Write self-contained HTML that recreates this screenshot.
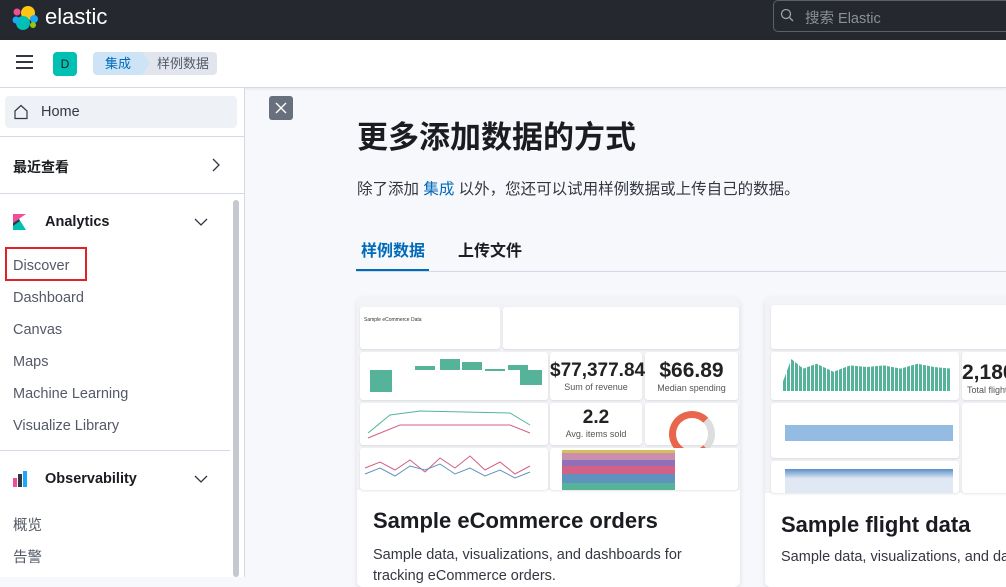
<!DOCTYPE html>
<html><head><meta charset="utf-8"><style>
*{box-sizing:border-box;margin:0;padding:0}
body{width:1006px;height:577px;overflow:hidden;background:#f7f8fc;font-family:"Liberation Sans","Noto Sans CJK SC",sans-serif;position:relative;color:#1a1c21}
.abs{position:absolute}
.top{left:0;top:0;width:1006px;height:40px;background:#25282f}
.bar2{left:0;top:40px;width:1006px;height:48px;background:#fff;border-bottom:1px solid #d3dae6;box-shadow:0 1px 3px rgba(0,0,0,.08)}
.side{left:0;top:88px;width:245px;height:489px;background:#fff;border-right:1px solid #d3dae6}
.nav{font-size:14.5px;color:#535966;left:13px}
.hr{left:0;width:245px;height:1px;background:#d3dae6}
.card{background:#fff;border-radius:6px;box-shadow:0 2px 6px rgba(0,0,0,.1);overflow:hidden}
.pn{position:absolute;background:#fff;border-radius:3px;box-shadow:0 1px 2px rgba(0,0,0,.1)}
.g{position:absolute;background:#54b399}
</style></head><body>
<div class="abs top">
 <svg class="abs" style="left:12px;top:4px" width="27" height="27" viewBox="0 0 27 27">
  <circle cx="16" cy="9" r="7" fill="#fec514"/><circle cx="11" cy="19" r="7" fill="#00bfb3"/>
  <circle cx="5" cy="8" r="3.5" fill="#f04e98"/><circle cx="22" cy="15" r="4" fill="#1ba9f5"/><circle cx="4" cy="16" r="3.5" fill="#1ba9f5"/><circle cx="21" cy="21" r="3" fill="#93c90e"/>
 </svg>
 <div class="abs" style="left:45px;top:4px;color:#fff;font-size:22px">elastic</div>
 <div class="abs" style="left:773px;top:0;width:240px;height:32px;border:1px solid #5a5f6b;border-radius:5px;background:#25282f"></div>
 <svg class="abs" style="left:780px;top:8px" width="14" height="14" viewBox="0 0 14 14"><circle cx="6" cy="6" r="4.5" fill="none" stroke="#98a2b3" stroke-width="1.3"/><path d="M9.5 9.5L13 13" stroke="#98a2b3" stroke-width="1.3"/></svg>
 <div class="abs" style="left:805px;top:7px;color:#8a8f99;font-size:14.5px">搜索 Elastic</div>
</div>
<div class="abs bar2">
 <div class="abs" style="left:16px;top:15px;width:17px;height:2px;background:#343741;box-shadow:0 6px 0 #343741,0 12px 0 #343741"></div>
 <div class="abs" style="left:53px;top:12px;width:24px;height:24px;background:#00bfb3;border-radius:4px;color:#1a1c21;font-size:12px;text-align:center;line-height:24px">D</div>
 <div class="abs" style="left:93px;top:12px;width:56px;height:23px;background:#cce4f5;border-radius:4px 0 0 4px;color:#006bb8;font-size:13px;line-height:23px;padding-left:12px">集成</div>
 <div class="abs" style="left:142px;top:12px;width:75px;height:23px;background:#e0e5ee;border-radius:0 4px 4px 0;color:#535966;font-size:13px;line-height:23px;padding-left:15px;clip-path:polygon(0 0,100% 0,100% 100%,0 100%,8px 50%)">样例数据</div>
 <div class="abs" style="left:142px;top:12px;width:8px;height:23px;background:#cce4f5;clip-path:polygon(0 0,0 100%,8px 50%)"></div>
</div>
<div class="abs side">
 <div class="abs" style="left:5px;top:8px;width:232px;height:32px;background:#eef1f6;border-radius:4px"></div>
 <svg class="abs" style="left:13px;top:16px" width="16" height="16" viewBox="0 0 16 16"><path d="M2 7L8 1.5 14 7V14.5H2Z" fill="none" stroke="#343741" stroke-width="1.2"/></svg>
 <div class="abs" style="left:41px;top:16px;font-size:14.5px;color:#343741">Home</div>
 <div class="abs hr" style="top:48px"></div>
 <div class="abs" style="left:13px;top:69px;font-size:14px;font-weight:bold">最近查看</div>
 <svg class="abs" style="left:211px;top:69px" width="10" height="16" viewBox="0 0 10 16"><path d="M2 2L8 8 2 14" fill="none" stroke="#343741" stroke-width="1.3"/></svg>
 <div class="abs hr" style="top:105px"></div>
 <svg class="abs" style="left:13px;top:126px" width="14" height="16" viewBox="0 0 14 16"><path d="M0 0H13L0 9Z" fill="#f04e98"/><path d="M0 9L6 5 13 16H0Z" fill="#00bfb3"/><path d="M0 9L6 5 7 7 0 12Z" fill="#343741"/></svg>
 <div class="abs" style="left:45px;top:126px;font-size:14.5px;font-weight:bold">Analytics</div>
 <svg class="abs" style="left:194px;top:129px" width="14" height="10" viewBox="0 0 14 10"><path d="M1 2L7 8 13 2" fill="none" stroke="#343741" stroke-width="1.3"/></svg>
 <div class="abs" style="left:5px;top:159px;width:82px;height:34px;border:2px solid #e0222a"></div>
 <div class="abs nav" style="top:170px">Discover</div>
 <div class="abs nav" style="top:202px">Dashboard</div>
 <div class="abs nav" style="top:234px">Canvas</div>
 <div class="abs nav" style="top:266px">Maps</div>
 <div class="abs nav" style="top:298px">Machine Learning</div>
 <div class="abs nav" style="top:330px">Visualize Library</div>
 <div class="abs" style="left:0;top:362px;width:230px;height:1px;background:#d3dae6"></div>
 <svg class="abs" style="left:13px;top:383px" width="16" height="16" viewBox="0 0 16 16"><rect x="0" y="7" width="4" height="9" fill="#f04e98"/><rect x="5" y="3" width="4" height="13" fill="#343741"/><rect x="10" y="0" width="4" height="16" fill="#1ba9f5"/></svg>
 <div class="abs" style="left:45px;top:383px;font-size:14.5px;font-weight:bold">Observability</div>
 <svg class="abs" style="left:194px;top:386px" width="14" height="10" viewBox="0 0 14 10"><path d="M1 2L7 8 13 2" fill="none" stroke="#343741" stroke-width="1.3"/></svg>
 <div class="abs nav" style="top:426px">概览</div>
 <div class="abs nav" style="top:458px">告警</div>
 <div class="abs" style="left:233px;top:112px;width:6px;height:377px;background:#c4c8cf;border-radius:3px"></div>
</div>
<div class="abs" style="left:269px;top:96px;width:24px;height:24px;background:#69707d;border-radius:3px"></div>
<svg class="abs" style="left:275px;top:102px" width="12" height="12" viewBox="0 0 12 12"><path d="M1 1L11 11M11 1L1 11" stroke="#fff" stroke-width="1.4"/></svg>
<div class="abs" style="left:357px;top:112px;font-size:31px;font-weight:bold;color:#1a1c21">更多添加数据的方式</div>
<div class="abs" style="left:357px;top:177px;font-size:15.5px;color:#343741">除了添加 <span style="color:#006bb8">集成</span> 以外，您还可以试用样例数据或上传自己的数据。</div>
<div class="abs" style="left:361px;top:237px;font-size:16px;font-weight:bold;color:#006bb8">样例数据</div>
<div class="abs" style="left:356px;top:269px;width:73px;height:2px;background:#006bb8"></div>
<div class="abs" style="left:458px;top:237px;font-size:16px;font-weight:bold;color:#1a1c21">上传文件</div>
<div class="abs" style="left:356px;top:271px;width:650px;height:1px;background:#d3dae6"></div>

<div class="abs card" style="left:357px;top:297px;width:383px;height:290px">
 <div class="abs" style="left:0;top:0;width:383px;height:193px;background:#f1f3f6">
  <div class="pn" style="left:3px;top:10px;width:140px;height:42px"><div style="font-size:5px;padding:10px 4px;color:#333">Sample eCommerce Data</div></div>
  <div class="pn" style="left:146px;top:10px;width:236px;height:42px"></div>
  <div class="pn" style="left:3px;top:55px;width:188px;height:48px">
   <div class="g" style="left:10px;top:18px;width:22px;height:22px"></div>
   <div class="g" style="left:55px;top:14px;width:20px;height:4px"></div>
   <div class="g" style="left:80px;top:7px;width:20px;height:11px"></div>
   <div class="g" style="left:102px;top:10px;width:20px;height:8px"></div>
   <div class="g" style="left:125px;top:17px;width:20px;height:2px"></div>
   <div class="g" style="left:148px;top:13px;width:20px;height:5px"></div>
   <div class="g" style="left:160px;top:18px;width:22px;height:15px"></div>
  </div>
  <div class="pn" style="left:193px;top:55px;width:92px;height:48px;text-align:center"><div style="font-size:19px;font-weight:bold;padding-top:8px;color:#222">$77,377.84</div><div style="font-size:9px;color:#555">Sum of revenue</div></div>
  <div class="pn" style="left:288px;top:55px;width:93px;height:48px;text-align:center"><div style="font-size:21px;font-weight:bold;padding-top:7px;color:#222">$66.89</div><div style="font-size:9px;color:#555">Median spending</div></div>
  <div class="pn" style="left:3px;top:106px;width:188px;height:42px">
   <svg class="abs" style="left:0;top:0" width="188" height="42"><path d="M8 30L30 12 60 8 150 10 170 22" fill="none" stroke="#54b399" stroke-width="1"/><path d="M8 35L40 22 150 22 170 30" fill="none" stroke="#d36086" stroke-width="1"/></svg>
  </div>
  <div class="pn" style="left:193px;top:106px;width:92px;height:42px;text-align:center"><div style="font-size:19px;font-weight:bold;padding-top:4px;color:#222">2.2</div><div style="font-size:9px;color:#555">Avg. items sold</div></div>
  <div class="pn" style="left:288px;top:106px;width:93px;height:42px"><div class="abs" style="left:24px;top:8px;width:46px;height:46px;border-radius:50%;border:7px solid #e7664c;border-right-color:#ddd"></div></div>
  <div class="pn" style="left:3px;top:151px;width:188px;height:42px">
   <svg class="abs" style="left:0;top:0" width="188" height="42"><path d="M5 20L20 14 35 22 50 12 65 24 80 10 95 20 110 8 125 22 140 14 155 26 170 18" fill="none" stroke="#d36086" stroke-width="1"/><path d="M5 26L20 20 35 28 50 18 65 22 80 16 95 26 110 20 125 28 140 22 155 30 170 24" fill="none" stroke="#6092c0" stroke-width="1"/></svg>
  </div>
  <div class="pn" style="left:193px;top:151px;width:188px;height:42px"><div class="abs" style="left:12px;top:2px;width:113px;height:40px;background:linear-gradient(#d6bf57 0 8%,#ca8eae 8% 25%,#9170b8 25% 40%,#d36086 40% 60%,#6092c0 60% 82%,#54b399 82%)"></div></div>
 </div>
 <div class="abs" style="left:16px;top:211px;font-size:22px;font-weight:bold">Sample eCommerce orders</div>
 <div class="abs" style="left:16px;top:248px;font-size:14.5px;color:#343741;line-height:21px;width:350px">Sample data, visualizations, and dashboards for tracking eCommerce orders.</div>
</div>

<div class="abs card" style="left:765px;top:297px;width:260px;height:290px">
 <div class="abs" style="left:0;top:0;width:260px;height:196px;background:#f1f3f6">
  <div class="pn" style="left:6px;top:8px;width:254px;height:44px"></div>
  <div class="pn" style="left:6px;top:55px;width:188px;height:48px"><div class="abs" style="left:12px;top:7px;width:168px;height:32px;background:repeating-linear-gradient(90deg,#54b399 0 3px,#fff 3px 4px);clip-path:polygon(0 70%,5% 0,12% 30%,20% 15%,30% 40%,40% 20%,50% 25%,60% 20%,70% 30%,80% 15%,90% 25%,100% 30%,100% 100%,0 100%)"></div></div>
  <div class="pn" style="left:197px;top:55px;width:63px;height:48px"><div style="font-size:21px;font-weight:bold;padding:9px 0 0 0;color:#222">2,180</div><div style="font-size:9px;color:#555;padding-left:5px">Total flights</div></div>
  <div class="pn" style="left:6px;top:106px;width:188px;height:55px"><div class="abs" style="left:14px;top:22px;width:168px;height:16px;background:#79aad9;opacity:.8"></div></div>
  <div class="pn" style="left:197px;top:106px;width:63px;height:90px"></div>
  <div class="pn" style="left:6px;top:164px;width:188px;height:32px"><div class="abs" style="left:14px;top:8px;width:168px;height:24px;background:linear-gradient(#5b8fc9,#dfe8f3 40%)"></div></div>
 </div>
 <div class="abs" style="left:16px;top:215px;font-size:22px;font-weight:bold">Sample flight data</div>
 <div class="abs" style="left:16px;top:252px;font-size:14.5px;color:#343741;white-space:nowrap">Sample data, visualizations, and dashboards</div>
</div>
</body></html>
